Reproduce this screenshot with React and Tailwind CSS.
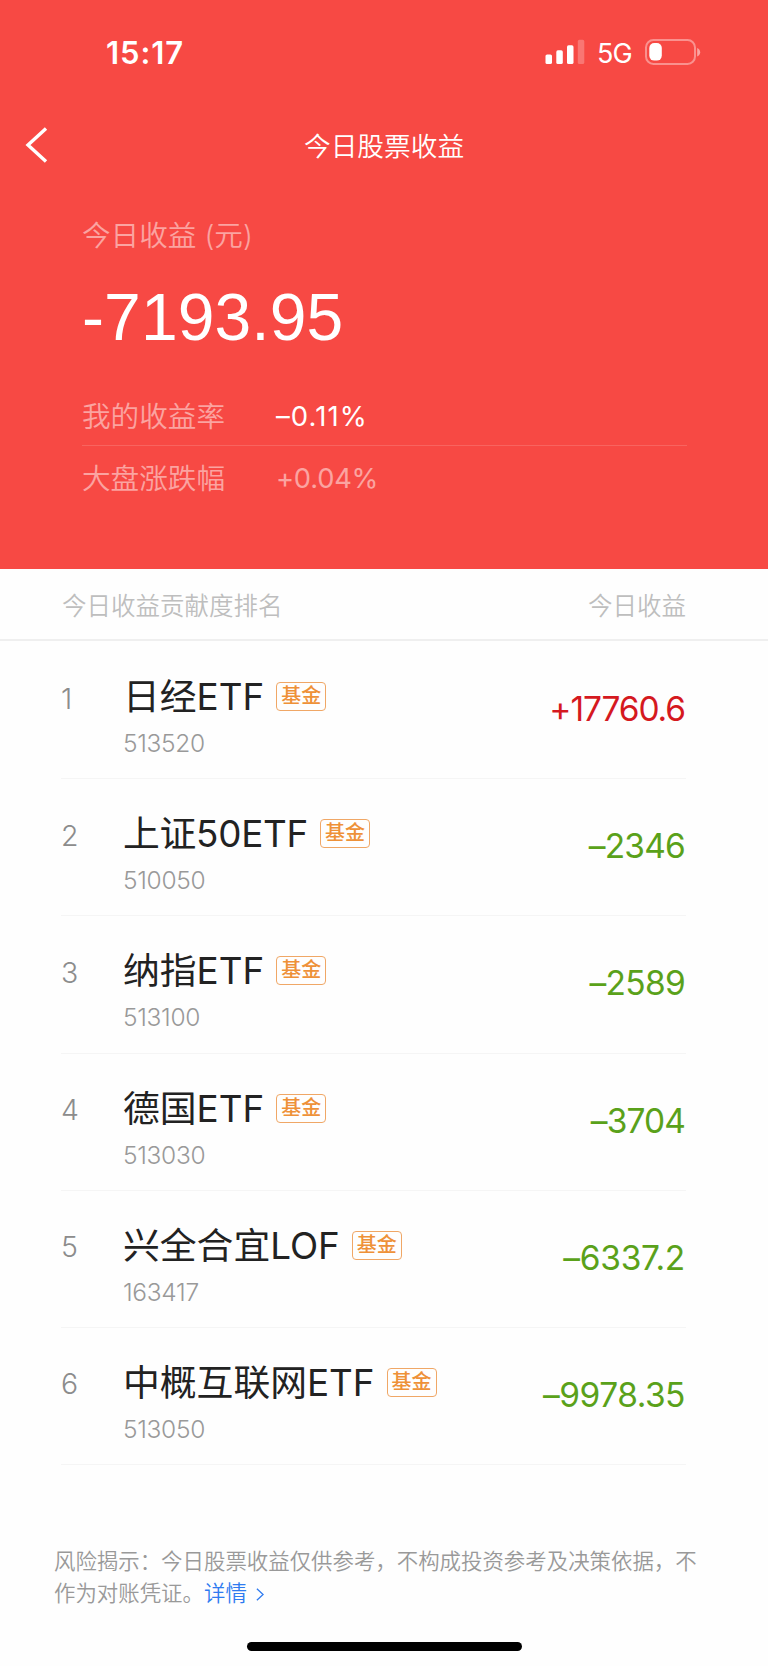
const funds = [
  { name: '日经ETF', code: '513520', value: '+17760.6', up: true, spacing: 'tracking-[-1.1px]' },
  { name: '上证50ETF', code: '510050', value: '–2346', spacing: 'tracking-[-0.8px]', nameSpacing: 'tracking-[-0.25px]' },
  { name: '纳指ETF', code: '513100', value: '–2589', spacing: 'tracking-[-0.7px]' },
  { name: '德国ETF', code: '513030', value: '–3704', spacing: 'tracking-[-0.9px]' },
  { name: '兴全合宜LOF', code: '163417', value: '–6337.2', spacing: 'tracking-[-0.3px]' },
  { name: '中概互联网ETF', code: '513050', value: '–9978.35', spacing: 'tracking-[-0.5px]' },
];

function StatusBar() {
  return (
    <div className="flex h-[104px] items-center justify-between pl-[106px] pr-[67px]">
      <div className="mt-[2px] text-[31px] leading-[40px] font-semibold tracking-[0.9px]">15:17</div>
      <div className="flex items-center">
        <svg className="h-[26px] w-[40px]" viewBox="0 0 40 26" fill="#fff">
          <rect x="0.5" y="15.5" width="6.5" height="9.5" rx="1.6" />
          <rect x="11.3" y="11.3" width="6.5" height="13.7" rx="1.6" />
          <rect x="22" y="6.3" width="6.5" height="18.7" rx="1.6" />
          <rect x="32.8" y="0.8" width="6.5" height="24.2" rx="1.6" opacity="0.25" />
        </svg>
        <span className="mt-[3px] ml-[12px] w-[37px] text-[27px] leading-[40px] tracking-[-1px]">5G</span>
        <svg className="ml-[11px] h-[26px] w-[56px]" viewBox="0 0 56 26" fill="none">
          <rect x="1" y="1" width="49" height="24" rx="7.5" stroke="#fff" strokeOpacity="0.4" strokeWidth="2" />
          <rect x="4.3" y="4" width="12.5" height="17.6" rx="5" fill="#fff" />
          <path d="M52.2 9v8.5c1.9-.8 3-2.3 3-4.2s-1.1-3.5-3-4.3z" fill="#fff" fillOpacity="0.5" />
        </svg>
      </div>
    </div>
  );
}

function FundRow({ rank, fund }) {
  return (
    <li className="ml-[61px] mr-[82px] flex h-[137.2px] border-b border-[#f5f5f5]">
      <span className="mt-[40.5px] w-[62px] text-[28.5px] leading-[32px] font-[350] text-[#8c8c8c]">{rank}</span>
      <div className="flex-1">
        <div className="mt-[29px] flex h-[52px] items-center">
          <span className={`text-[36.8px] leading-[52px] font-[370] text-[#222] whitespace-nowrap ${fund.nameSpacing ?? ''}`}>
            {fund.name}
          </span>
          <span className="-mt-px ml-[12px] flex h-[29px] w-[50px] items-center justify-center rounded-[4px] border border-[#f0a766] text-[20px] leading-[27px] font-medium text-[#ee9138]">
            基金
          </span>
        </div>
        <div className="mt-[4px] text-[24.5px] leading-[32px] font-[350] tracking-[-0.3px] text-[#999]">{fund.code}</div>
      </div>
      <span
        className={`mt-[47px] mr-px text-[33.5px] leading-[40px] ${fund.spacing} ${fund.up ? 'text-[#d5191f]' : 'text-[#5aa11a]'}`}
      >
        {fund.value}
      </span>
    </li>
  );
}

export default function App() {
  return (
    <div className="flex h-[1666px] w-[768px] flex-col bg-[#fefefe] font-['Inter','Noto_Sans_CJK_SC',sans-serif]">
      <header className="h-[569px] bg-[#f74944] text-white">
        <StatusBar />
        <div className="flex h-[82px] items-center pl-[25px]">
          <svg className="h-[38px] w-[24px]" viewBox="0 0 24 38" fill="none" stroke="#fff" strokeWidth="3.4">
            <path d="M21 2.5L3 19L21 35.5" />
          </svg>
          <h1 className="mt-[2px] ml-[255px] text-[26.7px] leading-[40px] font-[350]">今日股票收益</h1>
        </div>
        <div className="ml-[82px] mr-[81px]">
          <div className="mt-[30px] text-[28.6px] leading-[40px] font-[350] text-white/50">今日收益 (元)</div>
          <div className="mt-[23px] font-['Liberation_Sans',Arial,sans-serif] text-[66px] leading-[76px] tracking-[0.1px]">-7193.95</div>
          <div className="mt-[30px] flex h-[61px] items-center border-b border-white/15 pt-[4px] text-[28.6px] font-[350]">
            <span className="w-[194px] text-white/50">我的收益率</span>
            <span className="text-[27.5px] font-normal tracking-[1.1px]">–0.11%</span>
          </div>
          <div className="flex h-[63px] items-center pt-[4px] text-[28.6px] font-[350]">
            <span className="w-[194px] text-white/50">大盘涨跌幅</span>
            <span className="text-[27.3px] font-normal tracking-[-0.2px] text-white/50">+0.04%</span>
          </div>
        </div>
      </header>
      <div className="flex h-[72px] items-center justify-between border-b-2 border-[#efefef] pt-[4px] pl-[62px] pr-[82px] text-[24.5px] font-[350] text-[#bebebe]">
        <span>今日收益贡献度排名</span>
        <span>今日收益</span>
      </div>
      <ul className="pt-px">
        {funds.map((fund, i) => (
          <FundRow key={fund.code} rank={i + 1} fund={fund} />
        ))}
      </ul>
      <p className="ml-[54px] mt-[80px] w-[650px] text-[21.43px] leading-[32px] font-[350] text-[#999]">
        风险揭示：今日股票收益仅供参考，不构成投资参考及决策依据，不
        <br />
        作为对账凭证。
        <a className="text-[#2f7bf0]">
          详情
          <svg className="ml-[9px] inline h-[15px] w-[8px] align-[-1px]" viewBox="0 0 9 16" fill="none" stroke="currentColor" strokeWidth="1.5">
            <path d="M1 1.5L8 8L1 14.5" />
          </svg>
        </a>
      </p>
      <div className="mx-auto mb-[15px] mt-auto h-[9px] w-[275px] rounded-full bg-black" />
    </div>
  );
}
